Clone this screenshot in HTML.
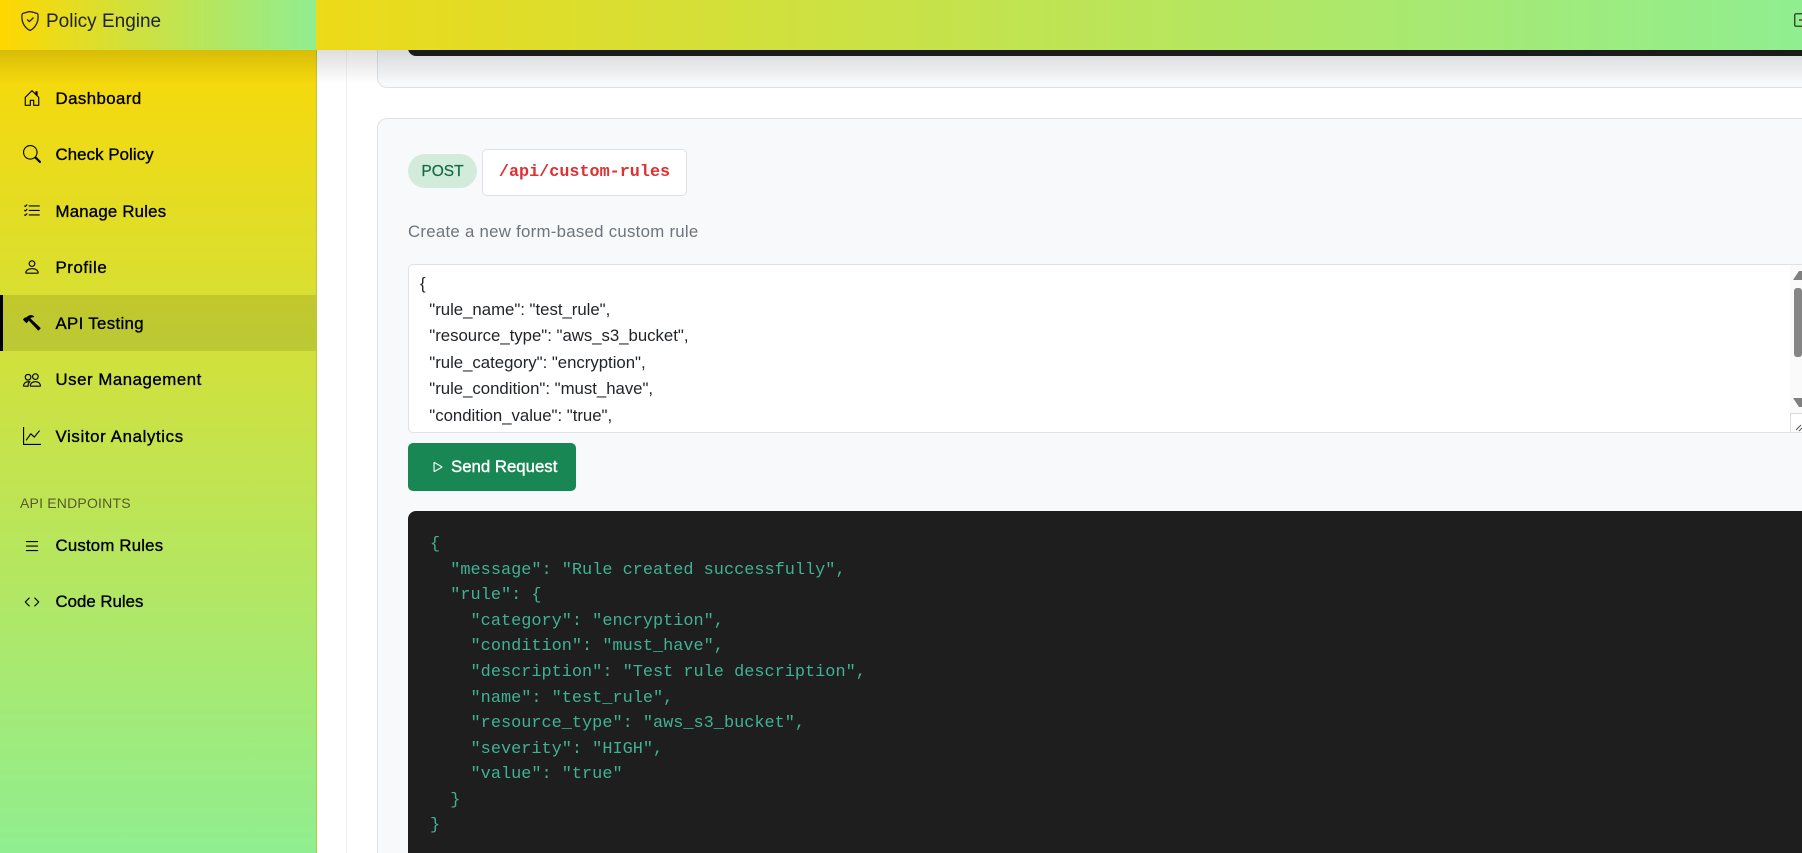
<!DOCTYPE html>
<html><head><meta charset="utf-8">
<style>
html,body{margin:0;padding:0;width:1802px;height:853px;overflow:hidden;background:#fff;font-family:"Liberation Sans",sans-serif}
#r{position:relative;width:1802px;height:853px;overflow:hidden;background:#fff}
.a{position:absolute}
#sb{left:0;top:0;width:316px;height:853px;background:linear-gradient(180deg,#ffd700,#90ee90);border-right:1px solid #b9c93c}
#sbh{left:0;top:0;width:316px;height:50px;background:linear-gradient(90deg,#ffd700,#90ee90);z-index:5}
#top{left:316px;top:0;width:1486px;height:50px;background:linear-gradient(90deg,#edda18,#90ee90);z-index:4}
#shade{left:0;top:50px;width:1802px;height:34px;background:linear-gradient(180deg,rgba(0,0,0,.13),rgba(0,0,0,0));z-index:3}
.n{position:absolute;left:55.5px;font-size:16.8px;color:#000;letter-spacing:.2px;-webkit-text-stroke:.35px #000;white-space:nowrap;line-height:20px}
.i{position:absolute;left:23px;width:18px;height:18px;fill:#000}
#act{left:0;top:295px;width:316px;height:56px;background:rgba(0,0,0,.1)}
#actb{left:0;top:295px;width:3px;height:56px;background:#000}
.box{background:#f8f9fa;border:1px solid #dee2e6;border-right:0;box-sizing:border-box}
pre{margin:0;font-family:"Liberation Mono",monospace;font-size:16.9px;line-height:25.55px;color:#40b294}
</style></head><body><div id="r">
<div class="a" style="left:346px;top:0;width:1px;height:853px;background:#f1f2f3"></div>
<div class="a box" style="left:377px;top:0;width:1425px;height:88px;border-top:0;border-radius:0 0 0 10px"></div>
<div class="a" style="left:408px;top:0;width:1394px;height:56px;background:#1e1e1e;border-radius:0 0 0 8px"></div>
<div class="a box" style="left:377px;top:118px;width:1425px;height:735px;border-bottom:0;border-radius:10px 0 0 0"></div>

<div class="a" style="left:408px;top:154px;width:69px;height:34px;border-radius:17px;background:#d3ebdb;color:#146c43;font-size:15.5px;line-height:36px;text-align:center;-webkit-text-stroke:.25px #146c43;overflow:hidden">POST</div>
<div class="a" style="left:482px;top:149px;width:205px;height:47px;box-sizing:border-box;background:#fff;border:1px solid #dee2e6;border-radius:5px;color:#dc3033;font:bold 16.8px/45px 'Liberation Mono',monospace;text-align:center">/api/custom-rules</div>
<div class="a" style="left:408px;top:221px;color:#6c757d;font-size:16.8px;line-height:22px;white-space:nowrap;letter-spacing:.28px">Create a new form-based custom rule</div>

<div class="a" style="left:408px;top:264px;width:1394px;height:169px;box-sizing:border-box;background:#fff;border:1px solid #dee2e6;border-right:0;border-radius:5px 0 0 5px;overflow:hidden">
<div class="a" style="left:11px;top:5.5px;font-size:16.8px;line-height:26.4px;color:#212529;white-space:pre;letter-spacing:-.02px">{
  "rule_name": "test_rule",
  "resource_type": "aws_s3_bucket",
  "rule_category": "encryption",
  "rule_condition": "must_have",
  "condition_value": "true",</div>
</div>
<div class="a" style="left:1790px;top:265px;width:12px;height:148px;background:#fafafa"></div>
<svg class="a" style="left:1790px;top:268px" width="12" height="144"><path d="M3 12l6-9 3 0v9z" fill="#808080"/><rect x="4" y="20" width="8" height="69" rx="3" fill="#858585"/><path d="M3 130l9 0v9l-3 0z" fill="#808080"/></svg>
<div class="a" style="left:1790px;top:413px;width:12px;height:19px;box-sizing:border-box;background:#fff;border:1px solid #dcdcdc;border-right:0;border-bottom:0"></div>
<svg class="a" style="left:1796px;top:424px" width="6" height="8"><path d="M0 6L5 1M3 7L6 4" stroke="#555" stroke-width="1"/></svg>

<div class="a" style="left:408px;top:443px;width:168px;height:48px;border-radius:5px;background:#198754;color:#fff">
<svg class="a" style="left:21px;top:15px;fill:#fff" width="18" height="18" viewBox="0 0 16 16"><path d="M10.804 8 5 4.633v6.734L10.804 8zm.792-.696a.802.802 0 0 1 0 1.392l-6.363 3.692C4.713 12.69 4 12.345 4 11.692V4.308c0-.653.713-.998 1.233-.696l6.363 3.692z"/></svg>
<div class="a" style="left:43px;top:14px;font-size:16.8px;line-height:20px;white-space:nowrap;-webkit-text-stroke:.4px #fff">Send Request</div>
</div>

<div class="a" style="left:408px;top:511px;width:1394px;height:342px;background:#1e1e1e;border-radius:8px 0 0 0">
<pre class="a" style="left:22px;top:21.3px">{
  "message": "Rule created successfully",
  "rule": {
    "category": "encryption",
    "condition": "must_have",
    "description": "Test rule description",
    "name": "test_rule",
    "resource_type": "aws_s3_bucket",
    "severity": "HIGH",
    "value": "true"
  }
}</pre>
</div>

<div class="a" id="sb"></div>
<div class="a" id="act"></div><div class="a" id="actb"></div>

<svg class="i" style="top:89px" viewBox="0 0 16 16"><path d="M8.354 1.146a.5.5 0 0 0-.708 0l-6 6A.5.5 0 0 0 1.5 7.5v7a.5.5 0 0 0 .5.5h4.5a.5.5 0 0 0 .5-.5v-4h2v4a.5.5 0 0 0 .5.5H14a.5.5 0 0 0 .5-.5v-7a.5.5 0 0 0-.146-.354L13 5.793V2.5a.5.5 0 0 0-.5-.5h-1a.5.5 0 0 0-.5.5v1.293L8.354 1.146zM2.5 14V7.707l5.5-5.5 5.5 5.5V14H10v-4a.5.5 0 0 0-.5-.5h-3a.5.5 0 0 0-.5.5v4H2.5z"/></svg>
<div class="n" style="top:89px;letter-spacing:.45px">Dashboard</div>
<svg class="i" style="top:145px" viewBox="0 0 16 16"><path d="M11.742 10.344a6.5 6.5 0 1 0-1.397 1.398h-.001c.03.04.062.078.098.115l3.85 3.85a1 1 0 0 0 1.415-1.414l-3.85-3.85a1.007 1.007 0 0 0-.115-.1zM12 6.5a5.5 5.5 0 1 1-11 0 5.5 5.5 0 0 1 11 0z"/></svg>
<div class="n" style="top:145px;letter-spacing:.1px">Check Policy</div>
<svg class="i" style="top:202px" viewBox="0 0 16 16"><path d="M5 11.5a.5.5 0 0 1 .5-.5h9a.5.5 0 0 1 0 1h-9a.5.5 0 0 1-.5-.5zm0-4a.5.5 0 0 1 .5-.5h9a.5.5 0 0 1 0 1h-9a.5.5 0 0 1-.5-.5zm0-4a.5.5 0 0 1 .5-.5h9a.5.5 0 0 1 0 1h-9a.5.5 0 0 1-.5-.5zM3.854 2.146a.5.5 0 0 1 0 .708l-1.5 1.5a.5.5 0 0 1-.708 0l-.5-.5a.5.5 0 1 1 .708-.708L2 3.293l1.146-1.147a.5.5 0 0 1 .708 0zm0 4a.5.5 0 0 1 0 .708l-1.5 1.5a.5.5 0 0 1-.708 0l-.5-.5a.5.5 0 1 1 .708-.708L2 7.293l1.146-1.147a.5.5 0 0 1 .708 0zm0 4a.5.5 0 0 1 0 .708l-1.5 1.5a.5.5 0 0 1-.708 0l-.5-.5a.5.5 0 0 1 .708-.708l.146.147 1.146-1.147a.5.5 0 0 1 .708 0z"/></svg>
<div class="n" style="top:202px;letter-spacing:.22px">Manage Rules</div>
<svg class="i" style="top:258px" viewBox="0 0 16 16"><path d="M8 8a3 3 0 1 0 0-6 3 3 0 0 0 0 6zm2-3a2 2 0 1 1-4 0 2 2 0 0 1 4 0zm4 8c0 1-1 1-1 1H3s-1 0-1-1 1-4 6-4 6 3 6 4zm-1-.004c-.001-.246-.154-.986-.832-1.664C11.516 10.68 10.289 10 8 10c-2.29 0-3.516.68-4.168 1.332-.678.678-.83 1.418-.832 1.664h10z"/></svg>
<div class="n" style="top:258px;letter-spacing:.6px">Profile</div>
<svg class="i" style="top:314px" viewBox="0 0 16 16"><path d="M9.972 2.508a.5.5 0 0 0-.16-.556l-.178-.129a5.009 5.009 0 0 0-2.076-.783C6.215.862 4.504 1.229 2.84 3.133H1.786a.5.5 0 0 0-.354.147L.146 4.567a.5.5 0 0 0 0 .706l2.571 2.579a.5.5 0 0 0 .708 0l1.286-1.29a.5.5 0 0 0 .146-.353V5.57l8.387 8.873A.5.5 0 0 0 14 14.5l1.5-1.5a.5.5 0 0 0 .017-.689l-9.129-8.63c.747-.456 1.772-.839 3.112-.839a.5.5 0 0 0 .472-.334z"/></svg>
<div class="n" style="top:314px;letter-spacing:.35px">API Testing</div>
<svg class="i" style="top:371px" viewBox="0 0 16 16"><path d="M15 14s1 0 1-1-1-4-5-4-5 3-5 4 1 1 1 1h8zm-7.978-1A.261.261 0 0 1 7 12.996c.001-.264.167-1.03.76-1.72C8.312 10.629 9.282 10 11 10c1.717 0 2.687.63 3.24 1.276.593.69.758 1.457.76 1.72l-.008.002a.274.274 0 0 1-.014.002H7.022zM11 7a2 2 0 1 0 0-4 2 2 0 0 0 0 4zm3-2a3 3 0 1 1-6 0 3 3 0 0 1 6 0zM6.936 9.28a5.88 5.88 0 0 0-1.23-.247A7.35 7.35 0 0 0 5 9c-4 0-5 3-5 4 0 .667.333 1 1 1h4.216A2.238 2.238 0 0 1 5 13c0-1.01.377-2.042 1.09-2.904.243-.294.526-.569.846-.816zM4.92 10A5.493 5.493 0 0 0 4 13H1c0-.26.164-1.03.76-1.724.545-.636 1.492-1.256 3.16-1.275zM1.5 5.5a3 3 0 1 1 6 0 3 3 0 0 1-6 0zm3-2a2 2 0 1 0 0 4 2 2 0 0 0 0-4z"/></svg>
<div class="n" style="top:370px;letter-spacing:.55px">User Management</div>
<svg class="i" style="top:427px" viewBox="0 0 16 16"><path d="M0 0h1v15h15v1H0V0Zm14.817 3.113a.5.5 0 0 1 .07.704l-4.5 5.5a.5.5 0 0 1-.74.037L7.06 6.767l-3.656 5.027a.5.5 0 0 1-.808-.588l4-5.5a.5.5 0 0 1 .758-.06l2.609 2.61 4.15-5.073a.5.5 0 0 1 .704-.07Z"/></svg>
<div class="n" style="top:427px;letter-spacing:.65px">Visitor Analytics</div>
<div class="a" style="left:20px;top:495px;font-size:14px;line-height:17px;color:#565b2c;white-space:nowrap;letter-spacing:.2px">API ENDPOINTS</div>
<svg class="i" style="top:537px" viewBox="0 0 16 16"><path d="M2.5 12a.5.5 0 0 1 .5-.5h10a.5.5 0 0 1 0 1H3a.5.5 0 0 1-.5-.5zm0-4a.5.5 0 0 1 .5-.5h10a.5.5 0 0 1 0 1H3a.5.5 0 0 1-.5-.5zm0-4a.5.5 0 0 1 .5-.5h10a.5.5 0 0 1 0 1H3a.5.5 0 0 1-.5-.5z"/></svg>
<div class="n" style="top:536px">Custom Rules</div>
<svg class="i" style="top:593px" viewBox="0 0 16 16"><path d="M5.854 4.854a.5.5 0 1 0-.708-.708l-3.5 3.5a.5.5 0 0 0 0 .708l3.5 3.5a.5.5 0 0 0 .708-.708L2.707 8l3.147-3.146zm4.292 0a.5.5 0 0 1 .708-.708l3.5 3.5a.5.5 0 0 1 0 .708l-3.5 3.5a.5.5 0 0 1-.708-.708L13.293 8l-3.147-3.146z"/></svg>
<div class="n" style="top:592px;letter-spacing:.02px">Code Rules</div>

<div class="a" id="shade"></div>
<div class="a" id="top"></div>
<div class="a" id="sbh">
<svg class="a" style="left:20px;top:11px;fill:#212529" width="20" height="20" viewBox="0 0 16 16"><path d="M5.338 1.59a61.44 61.44 0 0 0-2.837.856.481.481 0 0 0-.328.39c-.554 4.157.726 7.19 2.253 9.188a10.725 10.725 0 0 0 2.287 2.233c.346.244.652.42.893.533.12.057.218.095.293.118a.55.55 0 0 0 .101.025.615.615 0 0 0 .1-.025c.076-.023.174-.061.294-.118.24-.113.547-.29.893-.533a10.726 10.726 0 0 0 2.287-2.233c1.527-1.997 2.807-5.031 2.253-9.188a.48.48 0 0 0-.328-.39c-.651-.213-1.75-.56-2.837-.855C9.552 1.29 8.531 1.067 8 1.067c-.53 0-1.552.223-2.662.524zM5.072.56C6.157.265 7.31 0 8 0s1.843.265 2.928.56c1.11.3 2.229.655 2.887.87a1.54 1.54 0 0 1 1.044 1.262c.596 4.477-.787 7.795-2.465 9.99a11.775 11.775 0 0 1-2.517 2.453 7.159 7.159 0 0 1-1.048.625c-.28.132-.581.24-.829.24s-.548-.108-.829-.24a7.158 7.158 0 0 1-1.048-.625 11.777 11.777 0 0 1-2.517-2.453C1.928 10.487.545 7.169 1.141 2.692A1.54 1.54 0 0 1 2.185 1.43 62.456 62.456 0 0 1 5.072.56z"/><path d="M10.854 5.146a.5.5 0 0 1 0 .708l-3 3a.5.5 0 0 1-.708 0l-1.5-1.5a.5.5 0 1 1 .708-.708L7.5 7.793l2.646-2.647a.5.5 0 0 1 .708 0z"/></svg>
<div class="a" style="left:46px;top:10px;font-size:19px;line-height:24px;color:#212529;white-space:nowrap">Policy Engine</div>
</div>
<svg class="a" style="left:1794px;top:13px;z-index:6" width="8" height="14"><path d="M8 .75H2A1.25 1.25 0 0 0 .75 2v10A1.25 1.25 0 0 0 2 13.25h6" fill="none" stroke="#2c3a20" stroke-width="1.3"/><path d="M5 7h3" stroke="#2c3a20" stroke-width="1.3"/></svg>
</div></body></html>
